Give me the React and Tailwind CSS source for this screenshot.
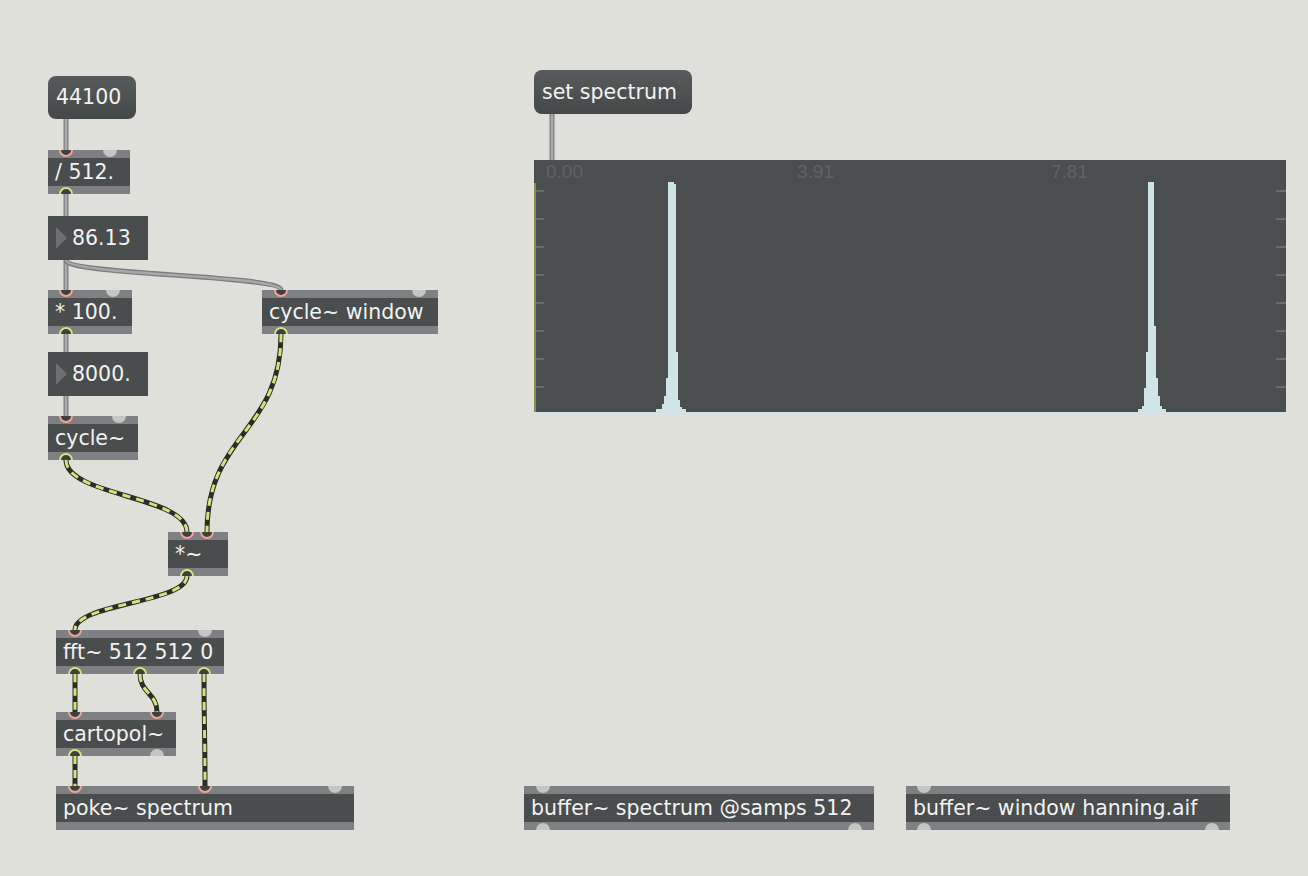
import React from "react";

const HOT = "hot";
const GRAY = "gray";

function Port({ x, kind, side }) {
  const base = "absolute w-[14px] h-[14px] rounded-full";
  let cls;
  if (kind === GRAY) cls = `${base} bg-[#c4c5c5]`;
  else if (side === "in") cls = `${base} border-2 border-[#f0a496] bg-[#3d4040]`;
  else cls = `${base} border-2 border-[#d5e37e] bg-[#3d4040]`;
  const style = side === "in" ? { left: x - 7, top: -7 } : { left: x - 7, bottom: -7 };
  return <div className={cls} style={style} />;
}

function Obj({ x, y, w, text, ins = [], outs = [] }) {
  return (
    <div
      className="absolute h-[44px] overflow-hidden bg-[#7e8083] flex flex-col"
      style={{ left: x, top: y, width: w }}
    >
      <div className="h-[8px]" />
      <div className="h-[28px] bg-[#494d4d] flex items-center pl-[7px] text-[20.5px] leading-none text-[#f1f2f2] whitespace-nowrap font-['DejaVu_Sans',sans-serif]">
        {text}
      </div>
      <div className="h-[8px]" />
      {ins.map((p, i) => (
        <Port key={"i" + i} x={p[0]} kind={p[1]} side="in" />
      ))}
      {outs.map((p, i) => (
        <Port key={"o" + i} x={p[0]} kind={p[1]} side="out" />
      ))}
    </div>
  );
}

function Msg({ x, y, w, h, text }) {
  return (
    <div
      className="absolute rounded-[8px] bg-linear-to-b from-[#585b5c] to-[#454848] flex items-center pl-[8px] text-[20.5px] leading-none text-[#f1f2f2] whitespace-nowrap font-['DejaVu_Sans',sans-serif]"
      style={{ left: x, top: y, width: w, height: h }}
    >
      {text}
    </div>
  );
}

function Num({ x, y, w, text }) {
  return (
    <div
      className="absolute h-[44px] bg-[#494d4d] flex items-center text-[20.5px] leading-none text-[#f1f2f2] whitespace-nowrap font-['DejaVu_Sans',sans-serif]"
      style={{ left: x, top: y, width: w }}
    >
      <svg width="24" height="44" viewBox="0 0 24 44" className="shrink-0">
        <polygon points="8,11 19,22 8,33" fill="#6c7073" />
      </svg>
      <span>{text}</span>
    </div>
  );
}

function cordPath(x0, y0, x1, y1) {
  const k = Math.max(Math.abs(y1 - y0) / 2, 12);
  return `M ${x0} ${y0} C ${x0} ${y0 + k}, ${x1} ${y1 - k}, ${x1} ${y1}`;
}

const grayCords = [
  [66, 119, 66, 150],
  [66, 194, 66, 216],
  [66, 260, 66, 290],
  [66, 260, 281, 290],
  [66, 334, 66, 352],
  [66, 396, 66, 416],
  [552, 114, 552, 160],
];

const sigCords = [
  [66, 460, 187, 532],
  [281, 334, 207, 532],
  [187, 576, 75, 630],
  [75, 674, 75, 712],
  [140, 674, 157, 712],
  [204, 674, 205, 786],
  [75, 756, 75, 786],
];

const ticks = [30, 58, 86, 114, 142, 170, 198, 226];

function Plot() {
  const peak1 = [
    [134, 22, 6],
    [140, 24, 2],
    [142, 192, 2],
    [132, 218, 2],
    [130, 236, 2],
    [144, 240, 2],
    [128, 244, 2],
    [146, 247, 2],
    [122, 249, 6],
    [148, 249, 4],
  ];
  const peak2 = [
    [614, 22, 6],
    [620, 166, 2],
    [612, 192, 2],
    [622, 218, 2],
    [610, 228, 2],
    [624, 236, 2],
    [608, 246, 2],
    [626, 246, 2],
    [604, 249, 4],
    [628, 249, 4],
  ];
  return (
    <div className="absolute left-[534px] top-[160px] w-[752px] h-[253px] bg-[#4a4e4e] overflow-hidden">
      <svg width="752" height="253" className="absolute left-0 top-0">
        <rect x="0" y="23" width="2" height="230" fill="#8b8e47" />
        {ticks.map((t) => (
          <rect key={"l" + t} x="2" y={t} width="8" height="2" fill="#686c6e" />
        ))}
        {ticks.map((t) => (
          <rect key={"r" + t} x="742" y={t} width="10" height="2" fill="#686c6e" />
        ))}
        {[...peak1, ...peak2].map((p, i) => (
          <rect key={i} x={p[0]} y={p[1]} width={p[2]} height={253 - p[1]} fill="#cfe4e6" />
        ))}
        <rect x="0" y="252" width="752" height="1" fill="#cfe4e6" />
      </svg>
      <span className="absolute left-[12px] top-[2px] text-[19px] leading-none text-[#5e6365] font-['Liberation_Sans',Arial,sans-serif]">
        0.00
      </span>
      <span className="absolute left-[263px] top-[2px] text-[19px] leading-none text-[#5e6365] font-['Liberation_Sans',Arial,sans-serif]">
        3.91
      </span>
      <span className="absolute left-[517px] top-[2px] text-[19px] leading-none text-[#5e6365] font-['Liberation_Sans',Arial,sans-serif]">
        7.81
      </span>
    </div>
  );
}

export default function App() {
  return (
    <div className="relative w-[1308px] h-[876px] bg-[#dfe0da] overflow-hidden">
      <svg width="1308" height="876" className="absolute left-0 top-0">
        {grayCords.map((c, i) => (
          <g key={"g" + i}>
            <path d={cordPath(...c)} stroke="#7c7d7d" strokeWidth="5" fill="none" />
            <path d={cordPath(...c)} stroke="#a8a9a9" strokeWidth="2.5" fill="none" />
          </g>
        ))}
        {sigCords.map((c, i) => (
          <g key={"s" + i}>
            <path d={cordPath(...c)} stroke="#2c2e25" strokeWidth="5" fill="none" />
            <path
              d={cordPath(...c)}
              stroke="#cde67c"
              strokeWidth="3"
              strokeDasharray="8 6"
              fill="none"
            />
          </g>
        ))}
      </svg>

      <Msg x={48} y={76} w={88} h={43} text="44100" />
      <Obj x={48} y={150} w={82} text="/ 512." ins={[[18, HOT], [62, GRAY]]} outs={[[18, HOT]]} />
      <Num x={48} y={216} w={100} text="86.13" />
      <Obj x={48} y={290} w={84} text="* 100." ins={[[18, HOT], [65, GRAY]]} outs={[[18, HOT]]} />
      <Num x={48} y={352} w={100} text="8000." />
      <Obj x={48} y={416} w={90} text="cycle~" ins={[[18, HOT], [71, GRAY]]} outs={[[18, HOT]]} />
      <Obj
        x={262}
        y={290}
        w={176}
        text="cycle~ window"
        ins={[[19, HOT], [157, GRAY]]}
        outs={[[19, HOT]]}
      />
      <Obj x={168} y={532} w={60} text="*~" ins={[[19, HOT], [39, HOT]]} outs={[[19, HOT]]} />
      <Obj
        x={56}
        y={630}
        w={168}
        text="fft~ 512 512 0"
        ins={[[19, HOT], [149, GRAY]]}
        outs={[[19, HOT], [84, HOT], [148, HOT]]}
      />
      <Obj
        x={56}
        y={712}
        w={120}
        text="cartopol~"
        ins={[[19, HOT], [101, HOT]]}
        outs={[[19, HOT], [101, GRAY]]}
      />
      <Obj
        x={56}
        y={786}
        w={298}
        text="poke~ spectrum"
        ins={[[19, HOT], [149, HOT], [279, GRAY]]}
      />

      <Msg x={534} y={70} w={158} h={44} text="set spectrum" />
      <Plot />

      <Obj
        x={524}
        y={786}
        w={350}
        text="buffer~ spectrum @samps 512"
        ins={[[19, GRAY]]}
        outs={[[19, GRAY], [331, GRAY]]}
      />
      <Obj
        x={906}
        y={786}
        w={324}
        text="buffer~ window hanning.aif"
        ins={[[18, GRAY]]}
        outs={[[18, GRAY], [306, GRAY]]}
      />
    </div>
  );
}
